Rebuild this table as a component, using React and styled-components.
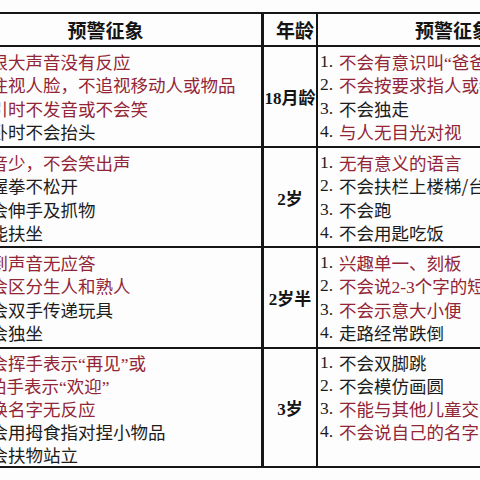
import { createGlobalStyle } from 'styled-components'
import styled from 'styled-components'

const Global = createGlobalStyle`
    html, body {
        margin: 0;
        padding: 0;
        background: #fdfdfd;
        overflow: hidden;
    }
    body {
        width: 480px;
        height: 480px;
        font-family: "Noto Sans CJK SC", "Noto Sans", sans-serif;
        color: #1c1c1c;
    }
`

const Tabela = styled.div`
    margin-top: 12px;
    margin-left: -50px;
    width: 638px;
    display: grid;
    grid-template-columns: 314px 54px 270px;
    grid-template-rows: 33px 101px 100px 101px 119px;
    border-top: 2px solid #161616;
    box-sizing: border-box;
`

const Celula = styled.div`
    box-sizing: border-box;
    border-bottom: 2px solid #161616;
    border-right: ${p => p.$borda || 0}px solid #161616;
    overflow: hidden;
    min-width: 0;
`

const Cabecalho = styled(Celula)`
    display: flex;
    align-items: center;
    justify-content: ${p => p.$alinhar || 'center'};
    padding-right: ${p => p.$alinhar ? '2px' : '0'};
    font-size: 19px;
    font-weight: 700;
    color: #141414;
`

const Lista = styled(Celula)`
    padding: ${p => p.$topo ?? 3}px 0 0 ${p => p.$esq}px;
    font-size: 17.5px;
    line-height: ${p => p.$altura || 23.4}px;
    white-space: nowrap;
`

const Idade = styled(Celula)`
    display: flex;
    align-items: center;
    justify-content: center;
    font-family: "Liberation Serif", "Noto Sans CJK SC", serif;
    font-weight: 700;
    font-size: 17px;
    white-space: nowrap;
    color: #141414;
`

const Item = styled.div`
    display: flex;
    color: ${p => p.$vermelho ? '#922536' : '#1c1c1c'};
`

const Num = styled.span`
    flex: 0 0 19px;
    font-family: "Liberation Serif", serif;
    color: #1c1c1c;
`

const Serif = styled.span`
    font-family: "Liberation Serif", serif;
    line-height: 0;
`

const Continua = styled.span`
    display: block;
    padding-left: 16px;
`

const Q = ({ children }) => <><Serif>“</Serif>{children}<Serif>”</Serif></>

const linhas = [
    {
        idade: '18月龄',
        esq: [
            ['对很大声音没有反应', 1],
            ['不注视人脸，不追视移动人或物品', 1],
            ['逗引时不发音或不会笑', 1],
            ['俯卧时不会抬头', 0],
        ],
        dir: [
            [<>不会有意识叫<Q>爸爸</Q>或<Q>妈妈</Q></>, 1],
            ['不会按要求指人或物', 1],
            ['不会独走', 0],
            ['与人无目光对视', 1],
        ],
    },
    {
        idade: '2岁',
        esq: [
            ['发音少，不会笑出声', 1],
            ['紧握拳不松开', 0],
            ['不会伸手及抓物', 0],
            ['不能扶坐', 0],
        ],
        dir: [
            ['无有意义的语言', 1],
            ['不会扶栏上楼梯/台阶', 0],
            ['不会跑', 0],
            ['不会用匙吃饭', 0],
        ],
    },
    {
        idade: '2岁半',
        esq: [
            ['听到声音无应答', 1],
            ['不会区分生人和熟人', 1],
            ['不会双手传递玩具', 0],
            ['不会独坐', 0],
        ],
        dir: [
            ['兴趣单一、刻板', 1],
            [<>不会说<Serif>2-3</Serif>个字的短语</>, 1],
            ['不会示意大小便', 1],
            ['走路经常跌倒', 0],
        ],
    },
    {
        idade: '3岁',
        topo: 2,
        altura: 23,
        esq: [
            [<>不会挥手表示<Q>再见</Q>或<Continua>拍手表示<Q>欢迎</Q></Continua></>, 1],
            ['呼唤名字无反应', 1],
            ['不会用拇食指对捏小物品', 0],
            ['不会扶物站立', 0],
        ],
        dir: [
            ['不会双脚跳', 0],
            ['不会模仿画圆', 0],
            ['不能与其他儿童交流、游戏', 1],
            ['不会说自己的名字', 1],
        ],
    },
]

function Itens({ lista }) {
    return lista.map(([texto, vermelho], i) => (
        <Item key={i} $vermelho={vermelho}>
            <Num>{i + 1}.</Num>
            <span>{texto}</span>
        </Item>
    ))
}

function Linha({ linha }) {
    return (
        <>
            <Lista $borda={3} $esq={4} $topo={linha.topo} $altura={linha.altura}>
                <Itens lista={linha.esq} />
            </Lista>
            <Idade $borda={2}>{linha.idade}</Idade>
            <Lista $esq={2} $topo={linha.topo} $altura={linha.altura}>
                <Itens lista={linha.dir} />
            </Lista>
        </>
    )
}

export default function App() {
    return (
        <>
            <Global />
            <Tabela>
                <Cabecalho $borda={3}>预警征象</Cabecalho>
                <Cabecalho $borda={2} $alinhar="flex-end">年龄</Cabecalho>
                <Cabecalho>预警征象</Cabecalho>
                {linhas.map(linha => (
                    <Linha key={linha.idade} linha={linha} />
                ))}
            </Tabela>
        </>
    )
}
